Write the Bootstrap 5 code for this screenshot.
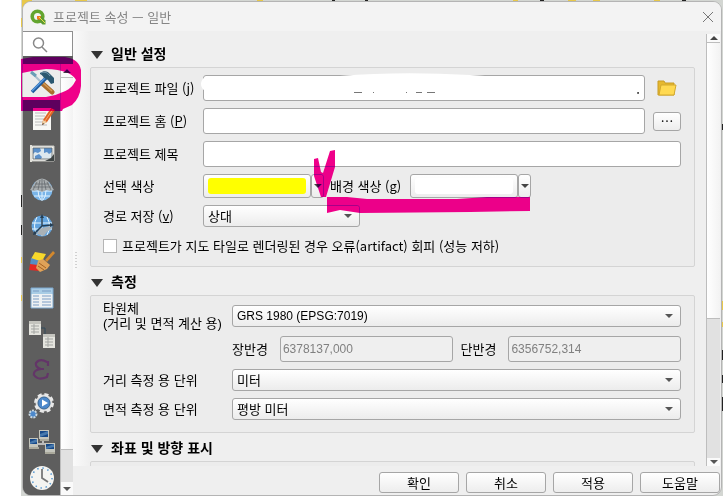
<!DOCTYPE html>
<html lang="ko">
<head>
<meta charset="utf-8">
<meta name="viewport" content="width=device-width, initial-scale=1">
<title>프로젝트 속성 — 일반</title>
<link href="https://cdn.jsdelivr.net/npm/bootstrap@5.3.0/dist/css/bootstrap.min.css" rel="stylesheet">
<style>
  body { font-family: "Noto Sans CJK KR", sans-serif; font-size: 13px; line-height: 16px; color: #000; background: #fff; }
  .desktop { height: 100vh; padding: 1px 1px 0 22px; overflow: hidden; }
  .map-behind { left: 21px; top: 0; right: 0; bottom: 0; background: #d3d6d2; }
  .dialog { background: #efefef; border: 1px solid #b4b4b4; border-radius: 9px; overflow: hidden; height: 100%; }
  .title-bar { height: 30px; gap: 7px; background: #f3f3f3; color: #858585; padding: 0 7px; }
  .side { width: 50px; }
  .search-box { height: 25px; background: #fff; border: 1px solid #8f8f8f; border-width: 1px 1px 0 0; }
  .search-box input { width: 18px; border: 0; outline: 0; background: transparent; }
  .pages { background: #5e5e5e; width: 37px; padding-top: 8px; }
  .page-btn { height: 36px; border: 0; background: transparent; padding: 0; }
  .page-btn.chosen { background: #ececec; }
  .pages-area { background: #5e5e5e; }
  .bar { background: #e1e1e1; border-left: 1px solid #bdbdbd; }
  .bar-left { width: 13px; margin-top: 8px; }
  .bar-right { width: 14px; margin: 3px 1px 0 0; }
  .bar button { border: 0; padding: 0; height: 13px; background: #fafafa; display: flex; align-items: center; justify-content: center; }
  .bar .thumb { background: linear-gradient(90deg, #fff, #f3f3f3); border: 1px solid #bdbdbd; border-width: 1px 0; }
  .splitter { width: 17px; background: linear-gradient(90deg, #fafafa, #efefef); }
  .settings { overflow: hidden; }
  .section-title { font-size: 14px; line-height: 20px; font-weight: 700; margin: 0; gap: 8px; height: 28px; padding-left: 1px; }
  .section-title svg { margin-top: 3px; }
  .box { background: #ececec; border: 1px solid #d4d4d4; border-radius: 2px; display: flex; flex-direction: column; gap: 7px; padding: 7px 13px 12px 12px; margin-right: 11px; }
  .lab { width: 100px; flex: none; }
  .lab-wide { width: 129px; flex: none; }
  .two-line { font-family: "Liberation Sans", "Noto Sans CJK KR", sans-serif; line-height: 15px; }
  .two-line span { display: block; height: 15px; }
  .tall { height: 26px; }
  .edit, .pick { border: 1px solid #a6a6a6; border-radius: 3px; font-size: 13px; line-height: 16px; color: #000; padding: 0 4px; min-width: 0; width: 100%; }
  .edit { height: 26px; background: #fff; }
  .edit:disabled { background: #efefef; color: #808080; padding: 0 2px; }
  .pick { height: 22px; appearance: none; background: url("data:image/svg+xml,%3Csvg xmlns='http://www.w3.org/2000/svg' width='8' height='4'%3E%3Cpath d='M0 0h8L4 4z' fill='%23555'/%3E%3C/svg%3E") no-repeat right 7px center, linear-gradient(#fff, #ececec); }
  .pick-short { width: 157px; }
  .latin { font-family: "Liberation Sans", "Noto Sans CJK KR", sans-serif; font-size: 12px; }
  .push { border: 1px solid #a6a6a6; border-radius: 3px; background: linear-gradient(#fff, #ededed); padding: 0; color: #000; }
  .swatch { width: 108px; height: 24px; padding: 3px 4px; }
  .swatch span { display: block; height: 16px; border-radius: 3px; }
  .arrow { width: 13px; height: 24px; display: flex; align-items: center; justify-content: center; }
  .yellow { background: #ff0; }
  .white { background: #fff; }
  .bg-label { width: 80px; margin-left: 6px; }
  .more { width: 28px; height: 19px; line-height: 10px; }
  .folder { width: 28px; border: 0; background: transparent; padding: 0; }
  .tick { appearance: none; width: 14px; height: 14px; border: 1px solid #b5b5b5; background: #fff; margin: 0 5px 0 0; }
  .footer { height: 29px; gap: 7px; padding: 6px 1px 0 0; }
  .footer .push { width: 80px; height: 21px; line-height: 16px; }
  .ink { left: 0; top: 0; pointer-events: none; }
  .marker { mix-blend-mode: darken; }
</style>
<script src="https://cdn.jsdelivr.net/npm/bootstrap@5.3.0/dist/js/bootstrap.bundle.min.js"></script>
</head>
<body>
<main class="desktop position-relative">
  <div class="map-behind position-absolute"></div>
  <svg class="ink position-absolute" width="723" height="496" aria-hidden="true">
    <path fill="#e8c84a" d="M22 0h10v8l-10 6zM75 0h12v2H75zM257 0h6v2h-6zM513 0h5v2h-5zM568 0h8v2h-8zM593 0h7v2h-7zM654 0h6v2h-6zM21 18h3v9h-3zM21 257h3v6h-3zM21 295h3v6h-3zM721 301h2v9h-2zM721 322h2v5h-2z"/>
    <path fill="#222" d="M332 0h3v2h-3zM365 0h3v2h-3zM540 0h4v2h-4zM682 0h4v2h-4zM21 195h2v12h-2zM21 225h2v10h-2zM721 124h2v6h-2zM721 350h2v10h-2zM721 375h2v8h-2zM721 397h2v14h-2z"/>
  </svg>
  <section class="dialog position-relative d-flex flex-column">
    <header class="title-bar d-flex align-items-center">
      <svg width="16" height="16" viewBox="0 0 16 16"><circle cx="7.5" cy="7.5" r="5.3" fill="none" stroke="#63a52e" stroke-width="3.6"/><path d="M7 7h4l4.500 4.500v4h-3L7 10z" fill="#5d9b30"/><path d="M7 7h4l-1 4-3-1z" fill="#ee7a1d"/><path d="M9 8l6 6" stroke="#e9e34b" stroke-width="1"/></svg>
      <span class="flex-grow-1">프로젝트 속성 — 일반</span>
      <button class="border-0 bg-transparent p-0 d-flex" aria-label="닫기"><svg width="12" height="12"><path d="M1 1l10 10M11 1L1 11" stroke="#777" fill="none"/></svg></button>
    </header>
    <div class="d-flex flex-grow-1 overflow-hidden">
      <aside class="side d-flex flex-column flex-shrink-0">
        <label class="search-box d-flex align-items-center flex-shrink-0 ps-2 overflow-hidden">
          <svg class="flex-shrink-0" width="18" height="18"><circle cx="7.500" cy="8" r="5" fill="none" stroke="#888" stroke-width="1.500"/><path d="M11 12l5 5" stroke="#888" stroke-width="1.500"/></svg>
          <input type="text" aria-label="검색">
        </label>
        <div class="pages-area d-flex flex-grow-1 overflow-hidden">
          <nav class="pages d-flex flex-column flex-shrink-0" aria-label="페이지">
            <button class="page-btn chosen flex-shrink-0" aria-label="일반"><svg width="26" height="26"><path d="M3 4l12 12" stroke="#a9bfcd" stroke-width="2"/><path d="M2 3l5 4" stroke="#6a9db6" stroke-width="3"/><path d="M14 15l9 8" stroke="#a96d2d" stroke-width="5" stroke-linecap="round"/><path d="M14 14l9 8" stroke="#d29a55" stroke-width="1.500"/><path d="M17 9L3 23" stroke="#1d5a9e" stroke-width="3.500"/><path d="M17 8L3 22" stroke="#5a9be0" stroke-width="1.500"/><path d="M11 4c4-3 8-2 10 1l4 4v5l-3 1-3-4-4-2c-1-2-2-3-4-4z" fill="#2b5870"/><path d="M12 4c4-2 7 0 9 3" stroke="#7b9db1" fill="none"/></svg></button>
            <button class="page-btn flex-shrink-0" aria-label="메타데이터"><svg width="26" height="26"><path d="M4 3h18v22H4z" fill="#f7f7f4"/><path d="M6 8h11M6 11h10M6 14h9M6 17h8M6 20h12" stroke="#bbb"/><path d="M22 3l4 2-8 12-5 3 1-5z" fill="#df6525"/><path d="M24 4l-8 12" stroke="#f9a66c"/><path d="M13 20l1-5 4 2z" fill="#efd3a6"/><path d="M13 20l1-2 1 1z" fill="#222"/></svg></button>
            <button class="page-btn flex-shrink-0" aria-label="보기 설정"><svg width="28" height="24"><path d="M3 4h23v15H3z" fill="#f2f2ee" stroke="#c9c9c4"/><path d="M5 6h19v11H5z" fill="#dce8ef"/><path d="M5 6h7l1 3-3 2-3-1-2 2zM16 6h8v4l-3 2-2-2-3 1zM7 14l4-2 3 3-1 2H7z" fill="#5a90cb"/><path d="M5 6h19v11H5z" fill="none" stroke="#5d6468" stroke-width=".8"/><path d="M26 12l-3 4-6 3h9z" fill="#3e4444"/><path d="M2 3h2v17H2z" fill="#e1e1da"/></svg></button>
            <button class="page-btn flex-shrink-0" aria-label="좌표계"><svg width="26" height="26"><circle cx="13" cy="13" r="10.500" fill="#79b5e9"/><path d="M3 14h20M5 19h16M13 12v12M9 13q0 7 3 10M17 13q0 7-3 10" stroke="#e0f2ff" fill="none"/><path d="M7 4q6-5 12 0l6 9-4 1-3-1-5 2-5-2-3 1-4-1z" fill="#a8adaf"/><path d="M8 5l-4 8M11 3l-2 10M13 2v12M15 3l2 10M18 5l4 8M6 7h14M4 10h18" stroke="#656b6e" fill="none" stroke-width=".8"/></svg></button>
            <button class="page-btn flex-shrink-0" aria-label="변환"><svg width="26" height="26"><circle cx="13" cy="13" r="10.500" fill="#62a4df"/><path d="M3 10h20M3 16h20M13 3v20M8 4q-5 9 0 18M18 4q5 9 0 18" stroke="#e6f6ff" fill="none"/><path d="M8 21q1-7 14-8l1 2q-5 3-8 8z" fill="#aab2b7"/><path d="M13 3v10l9-1M13 13L6 20" stroke="#263f54" stroke-width="1.500" fill="none"/><path d="M11 5l2-4 2 4zM21 10l4 2-4 2zM4 22l1-4 3 3z" fill="#263f54"/></svg></button>
            <button class="page-btn flex-shrink-0" aria-label="기본 스타일"><svg width="28" height="26"><path d="M7 3l11 2-5 9-10-4z" fill="#f7d82b"/><path d="M3 9l9 3-3 6-7-2z" fill="#568ec5"/><path d="M2 15l8 1 1 6-10-1z" fill="#e32924"/><path d="M17 11l8-9 2 2-8 9z" fill="#d3882d"/><path d="M10 12l5-2 7 6-3 4-7 3-4-4z" fill="#e0a258"/><path d="M11 14l7 5M10 17l6 4" stroke="#a66222"/></svg></button>
            <button class="page-btn flex-shrink-0" aria-label="데이터 소스"><svg width="26" height="24"><path d="M2 2h22v20H2z" fill="#eef1f3"/><path d="M2 2h22v6H2z" fill="#a8cce5"/><path d="M4 5h6M13 5h9M4 10h6M13 10h9M4 13h6M13 13h9M4 16h6M13 16h9M4 19h6M13 19h9" stroke="#7b9cc4"/><path d="M2 2h22v20H2z" stroke="#7da8cf" fill="none"/></svg></button>
            <button class="page-btn flex-shrink-0" aria-label="관계"><svg width="28" height="28"><path d="M13 8h4v6" stroke="#334b5a" fill="none"/><path d="M1 1h12v14H1zM15 14h12v14H15z" fill="#e4e4de"/><path d="M1 1h12v3H1zM15 14h12v3H15z" fill="#c4c4be"/><path d="M3 6h8M3 9h8M3 12h8M6 4v10M17 19h8M17 22h8M17 25h8M20 17v10" stroke="#a3a5a2"/></svg></button>
            <button class="page-btn flex-shrink-0" aria-label="변수"><svg width="22" height="24"><path d="M17 8V4H16Q9 0 5 5q-1 4 5 6h3M10 11Q2 12 3 17q4 6 13 2l1-4" stroke="#633568" stroke-width="2.200" fill="none"/></svg></button>
            <button class="page-btn flex-shrink-0" aria-label="매크로"><svg width="28" height="28"><circle cx="16" cy="11" r="8.500" fill="#ddd" stroke="#e8e8e8" stroke-width="3" stroke-dasharray="4 2.700"/><circle cx="16" cy="11" r="6" fill="#4c88cb" stroke="#396694"/><path d="M14 7.500l6 3.500-6 3.500z" fill="#fff"/><circle cx="5" cy="22" r="3.500" fill="#4c88cb" stroke="#ccd8df" stroke-width="2" stroke-dasharray="2 1"/></svg></button>
            <button class="page-btn flex-shrink-0" aria-label="QGIS 서버"><svg width="28" height="26"><path d="M9 15h9M15 10v5" stroke="#bbb" stroke-width="2"/><g fill="#c4c5bc"><path d="M11 1h10v9H11zM1 9h9v9H1zM17 14h10v9H17z"/></g><g fill="#174989"><path d="M12 2h8v6h-8zM2 10h7v5H2zM18 15h8v5h-8z"/></g><path d="M12 5l8-3v3l-8 3zM2 13l7-3v3l-7 2zM18 18l8-3v3l-8 2z" fill="#4779ad"/><path d="M12 11h9M1 19h10M17 24h10" stroke="#aaa99c" stroke-width="2"/></svg></button>
            <button class="page-btn flex-shrink-0" aria-label="시간"><svg width="26" height="26"><circle cx="13" cy="13" r="12" fill="#f4f4f1"/><circle cx="13" cy="13" r="10" fill="none" stroke="#5296d0" stroke-width="1.500" stroke-dasharray="1.500 3.740"/><path d="M13 4v9l6 4" stroke="#777" stroke-width="1.800" fill="none"/></svg></button>
          </nav>
          <div class="bar bar-left d-flex flex-column flex-grow-1">
            <button aria-label="위로"><svg width="8" height="4"><path d="M0 4h8L4 0z" fill="#444"/></svg></button>
            <div class="thumb flex-grow-1"></div>
            <div class="pt-4 pb-2 pe-1"></div>
            <button aria-label="아래로"><svg width="8" height="4"><path d="M0 0h8L4 4z" fill="#555"/></svg></button>
          </div>
        </div>
      </aside>
      <div class="d-flex flex-column flex-grow-1 overflow-hidden">
        <div class="d-flex flex-grow-1 overflow-hidden">
          <div class="splitter d-flex align-items-center flex-shrink-0 pt-4" aria-hidden="true"><svg width="6" height="18"><path d="M3 0v18" stroke="#aaa" stroke-dasharray="1 2"/></svg></div>
          <div class="settings flex-grow-1">
            <h2 class="section-title d-flex align-items-center mt-2"><svg width="12" height="8"><path d="M0 0h12L6 8z" fill="#333"/></svg>일반 설정</h2>
            <div class="box">
              <div class="d-flex align-items-center"><label class="lab" for="file">프로젝트 파일 (<u>j</u>)</label><input class="edit text-end" id="file" value="."><button class="folder ms-2 flex-shrink-0" aria-label="폴더 열기"><svg width="20" height="18"><path d="M1 2h6l1 2h9v12H1z" fill="#e6b82e" stroke="#c89c25"/><path d="M4 6h15l-2 10H2z" fill="#ffd951" stroke="#d3a92e"/></svg></button></div>
              <div class="d-flex align-items-center"><label class="lab" for="home">프로젝트 홈 (<u>P</u>)</label><input class="edit" id="home"><button class="push more ms-2 flex-shrink-0" aria-label="찾아보기">⋯</button></div>
              <div class="d-flex align-items-center"><label class="lab" for="name">프로젝트 제목</label><input class="edit" id="name"></div>
              <div class="d-flex align-items-center"><span class="lab">선택 색상</span>
                <button class="push swatch" aria-label="선택 색상"><span class="yellow"></span></button><button class="push arrow" aria-label="선택 색상 메뉴"><svg width="8" height="4"><path d="M0 0h8L4 4z" fill="#444"/></svg></button>
                <span class="bg-label">배경 색상 (<u>g</u>)</span>
                <button class="push swatch" aria-label="배경 색상"><span class="white"></span></button><button class="push arrow" aria-label="배경 색상 메뉴"><svg width="8" height="4"><path d="M0 0h8L4 4z" fill="#444"/></svg></button></div>
              <div class="d-flex align-items-center"><label class="lab" for="save">경로 저장 (<u>v</u>)</label><select class="pick pick-short" id="save"><option>상대</option></select></div>
              <div class="d-flex align-items-center pt-1"><input class="tick" type="checkbox" id="art"><label for="art">프로젝트가 지도 타일로 렌더링된 경우 오류(artifact) 회피 (성능 저하)</label></div>
            </div>
            <h2 class="section-title d-flex align-items-center"><svg width="12" height="8"><path d="M0 0h12L6 8z" fill="#333"/></svg>측정</h2>
            <div class="box">
              <div class="d-flex align-items-center tall"><label class="lab-wide two-line" for="ell"><span>타원체</span><span>(거리 및 면적 계산 용)</span></label><select class="pick latin" id="ell"><option>GRS 1980 (EPSG:7019)</option></select></div>
              <div class="d-flex align-items-center"><span class="lab-wide"></span>
                <div class="row g-0 flex-grow-1">
                  <div class="col-6 d-flex align-items-center pe-1"><label class="flex-shrink-0 pe-2 me-1" for="major">장반경</label><input class="edit latin" id="major" value="6378137,000" disabled></div>
                  <div class="col-6 d-flex align-items-center ps-1"><label class="flex-shrink-0 pe-2 me-1" for="minor">단반경</label><input class="edit latin" id="minor" value="6356752,314" disabled></div>
                </div></div>
              <div class="d-flex align-items-center"><label class="lab-wide" for="dist">거리 측정 용 단위</label><select class="pick" id="dist"><option>미터</option></select></div>
              <div class="d-flex align-items-center"><label class="lab-wide" for="area">면적 측정 용 단위</label><select class="pick" id="area"><option>평방 미터</option></select></div>
            </div>
            <h2 class="section-title d-flex align-items-center"><svg width="12" height="8"><path d="M0 0h12L6 8z" fill="#333"/></svg>좌표 및 방향 표시</h2>
            <div class="box"></div>
          </div>
          <div class="bar bar-right d-flex flex-column flex-shrink-0">
            <button aria-label="위로"><svg width="8" height="4"><path d="M0 4h8L4 0z" fill="#444"/></svg></button>
            <div class="thumb h-100"></div>
            <div class="h-50"></div>
            <button aria-label="아래로"><svg width="8" height="4"><path d="M0 0h8L4 4z" fill="#555"/></svg></button>
          </div>
        </div>
        <footer class="footer d-flex justify-content-end flex-shrink-0">
          <button class="push">확인</button><button class="push">취소</button><button class="push">적용</button><button class="push">도움말</button>
        </footer>
      </div>
    </div>
  </section>
  <svg class="ink position-absolute" width="723" height="496" aria-hidden="true">
    <path fill="#fff" d="M205 77l135-1q60-5 130-1l30 2v14H205q-4-3-4-7t4-7z"/>
    <path d="M354 92.500h8M373 92.500h1M406 92.500h1M416 92.500h6M427 92.500h8" stroke="#777"/>
  </svg>
  <svg class="ink marker position-absolute" width="723" height="496" aria-hidden="true">
    <g fill="#ef0089">
      <path fill-rule="evenodd" d="M21 59l12-2h32q14 2 16 13v16q-1 12-9 19l-9 4-1 2H21zM22 73l10-2 14-2q12 0 22 4 6 3 8 7l-3 5q-4 5-10 7-8 4-17 5H22z"/>
      <path d="M314 159l4-1 3 14 2 1 7-22 5-1v17l-9 30h-5l-7-21z"/>
      <path d="M327 197h20l20 2h90l30-2h43v14l-60 1-110 1-20-3-13 3z"/>
    </g>
  </svg>
</main>
</body>
</html>
